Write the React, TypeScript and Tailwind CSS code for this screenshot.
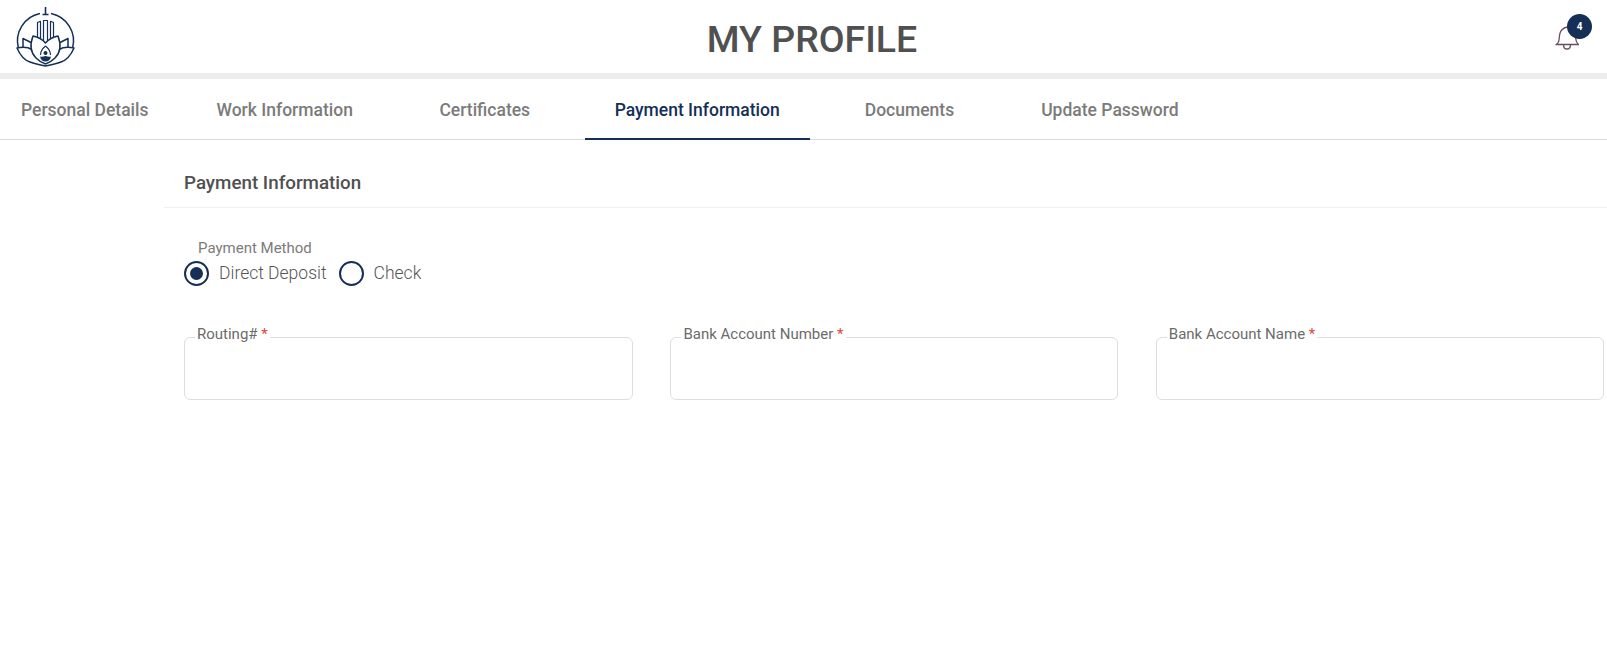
const navy = "#152f57";

const tabs = [
  { name: "Work Information", gap: "mr-[26.500px]" },
  { name: "Certificates", gap: "mr-[24.500px]" },
  { name: "Payment Information", gap: "mr-[25px]" },
  { name: "Documents", gap: "mr-[27px]" },
  { name: "Update Password", gap: "mr-[25px]" },
];

function Logo() {
  return (
    <svg viewBox="13 5 64 64" className="w-16 h-16" fill="none" stroke={navy} strokeWidth={1.5} strokeLinejoin="round">
      {/* ring */}
      <path d="M18.400 48A28 28 0 0 1 40 13.500M51 13.500A28 28 0 0 1 72.600 48" />
      {/* tower */}
      <path d="M45.500 7v7M42.500 14.500h6" strokeWidth={1.6} />
      <path d="M37.500 37V22.500l3-1.200V40M43.500 42V20.500h4V42M50.500 40V21.300l3 1.200V37" strokeWidth={1.2} />
      {/* lotus */}
      <path d="M23 47.500V38.500l10 5M68 47.500V38.500l-10 5" fill="#fff" />
      <path d="M17 48c3 7 7 12 13 14 5 2 10 3 15.500 4 5.500-1 10.500-2 15.500-4 6-2 10-7 13-14-6-1.500-11-1-15 1.500H32c-4-2.500-9-3-15-1.500z" fill="#fff" />
      <path d="M33 36c-3 8-3 16 3 22 3 3 6 5 9.500 6 3.500-1 6.500-3 9.500-6 6-6 6-14 3-22-5 1-9 3-12.500 7-3.500-4-7.500-6-12.500-7z" fill="#fff" />
      {/* figure */}
      <path d="M45.500 46c-3 2.500-5 5.500-5 9M45.500 46c3 2.500 5 5.500 5 9" strokeWidth={1.2} />
      <circle cx="45.500" cy="53" r="2" fill={navy} stroke="none" />
      <path d="M40 56.500c.5 3 2.500 5 5.500 5s5-2 5.500-5c-1.500 .6-3 .3-5.500-.5-2.500 .8-4 1.100-5.500 .5z" fill={navy} stroke="none" />
    </svg>
  );
}

function Bell() {
  return (
    <div className="relative w-[34px] h-[28px] pl-[8px] mt-[3px]">
      <svg viewBox="0 0 24 26" className="w-[24px] h-[26px]" fill="none" stroke="#6d4a5f" strokeWidth={1.3} strokeLinejoin="round">
        <path d="M1 20.500c2-1 3-2.500 3.200-6 .2-3.500 .3-6 2.500-8.500C8.500 4 11 3 13 3c3 0 6 2 7 5 .8 2.500 .5 4.500 .8 7 .2 2.500 1.200 4.300 2.700 5.500z" />
        <path d="M8.500 20.700c0 3 1.700 4.300 3.500 4.300s3.500-1.300 3.500-4.300" />
      </svg>
      <span className="absolute left-[20px] top-[-10px] w-[25px] h-[25px] rounded-full bg-[#152f57] text-white text-[10px] font-bold flex items-center justify-center">
        4
      </span>
    </div>
  );
}

function Radio({ label, checked }: { label: string; checked?: boolean }) {
  return (
    <label className="flex items-center gap-[10px]">
      <span className="w-[25px] h-[25px] rounded-full border-2 border-[#152f57] flex items-center justify-center">
        {checked && <span className="w-[13px] h-[13px] rounded-full bg-[#152f57]" />}
      </span>
      <span className="text-[17.500px] font-light text-[#555555] leading-[25px]">{label}</span>
    </label>
  );
}

function Field({ label }: { label: string }) {
  return (
    <fieldset className="h-[75px] border border-[#dedede] rounded-[6px] px-[10px]">
      <legend className="px-[2px] pb-[6px] text-[15px] leading-[18px] text-[#6b6b6b]">
        {label} <span className="text-[#d9493a]">*</span>
      </legend>
    </fieldset>
  );
}

export default function App() {
  return (
    <div className="min-h-[648px] bg-white font-['Roboto',sans-serif]">
      <header className="h-[79px] border-b-[6px] border-[#ededed] flex items-center justify-between pl-[13px] pr-[26px]">
        <Logo />
        <h1 className="text-[37.500px] mt-[6px] font-medium text-[#505050] leading-none">MY PROFILE</h1>
        <Bell />
      </header>

      <nav className="flex h-[61px] border-b border-[#dcdcdc]">
        <a className="flex items-center pt-[2px] pl-[21px] pr-[13px] mr-[25px] text-[17.500px] font-medium text-[#7b7b7b]">
          Personal Details
        </a>
        {tabs.map((tab) =>
          tab.name === "Payment Information" ? (
            <a
              key={tab.name}
              className={`flex items-center h-[61px] pt-[4px] px-[30px] ${tab.gap} text-[17.500px] font-medium text-[#152f57] border-b-2 border-[#152f57]`}
            >
              {tab.name}
            </a>
          ) : (
            <a
              key={tab.name}
              className={`flex items-center pt-[2px] px-[30px] ${tab.gap} text-[17.500px] font-medium text-[#7b7b7b]`}
            >
              {tab.name}
            </a>
          )
        )}
      </nav>

      <main className="pl-[164px]">
        <h2 className="h-[68px] border-b border-[#efefef] pl-[20px] pt-[20px] flex items-center text-[18.800px] font-medium text-[#505050]">
          Payment Information
        </h2>

        <section className="pl-[20px] pr-[3px] pt-[31px]">
          <p className="pl-[14px] text-[15px] leading-[18px] text-[#7b7b7b]">Payment Method</p>
          <div className="flex gap-[12px] mt-[4px]">
            <Radio label="Direct Deposit" checked />
            <Radio label="Check" />
          </div>

          <div className="grid grid-cols-[449px_448px_448px] gap-x-[37.400px] mt-[39px]">
            <Field label="Routing#" />
            <Field label="Bank Account Number" />
            <Field label="Bank Account Name" />
          </div>
        </section>
      </main>
    </div>
  );
}
